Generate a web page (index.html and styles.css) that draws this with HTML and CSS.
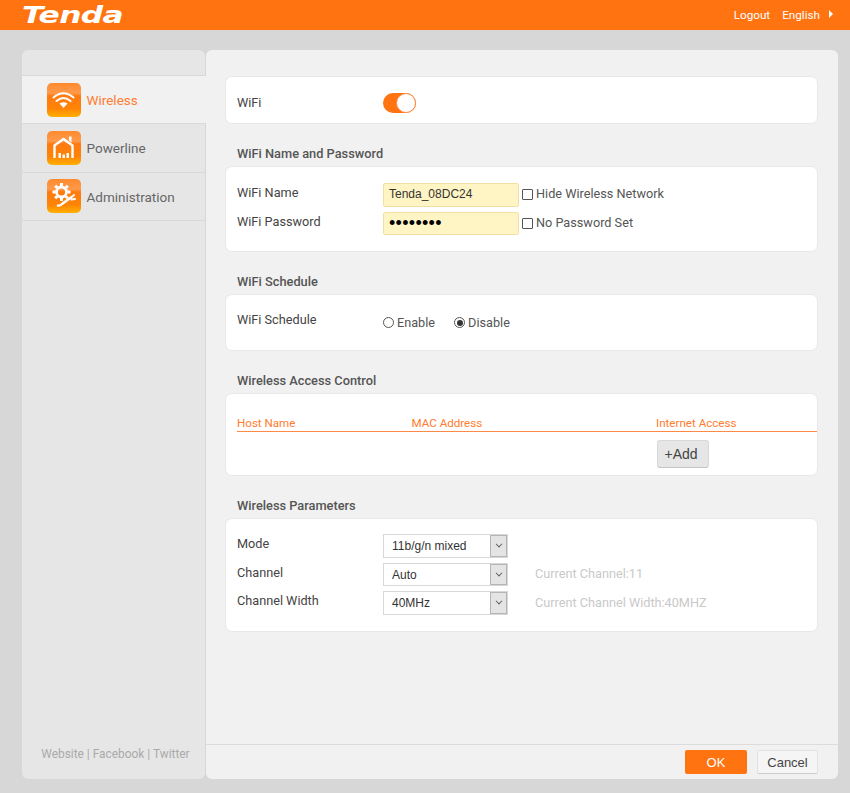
FILE: index.html
```html
<!DOCTYPE html>
<html lang="en">
<head>
  <meta charset="UTF-8" />
  <title>Tenda Web Master</title>
  <link rel="stylesheet" href="styles.css">
</head>
<body>
  <header class="topbar">
    <span class="logo">Tenda</span>
    <nav class="top-links">
      <a>Logout</a>
      <a class="lang">English</a>
    </nav>
  </header>

  <div class="shell">
    <aside class="sidebar">
      <ul class="menu">
        <li class="active">
          <span class="menu-icon">
            <svg viewBox="0 0 34 34" width="34" height="34"><g fill="none" stroke="#fff" stroke-linecap="round" stroke-width="2"><path d="M6.500 14.500Q16.500 6 26.500 14.500"/><path d="M9.500 18Q16.500 12 23.500 18"/></g><path fill="#fff" d="M12.500 20.500Q16.500 18 20.500 20.500L16.500 25z"/></svg>
          </span>
          <span class="menu-text">Wireless</span>
        </li>
        <li>
          <span class="menu-icon">
            <svg viewBox="0 0 34 34" width="34" height="34"><path fill="none" stroke="#fff" stroke-width="2.400" stroke-linejoin="round" d="M7.500 27V14.500L16.500 8l9 6.500V27"/><path fill="#fff" d="M22 5.500h2.500v6L22 9.500zM11.500 22h2.500v5h-2.500zM15.500 23.500H18V27h-2.500zM19.500 22H22v5h-2.500z"/></svg>
          </span>
          <span class="menu-text">Powerline</span>
        </li>
        <li>
          <span class="menu-icon">
            <svg viewBox="0 0 34 34" width="34" height="34"><circle cx="14.500" cy="13" r="5" fill="none" stroke="#fff" stroke-width="2.800"/><g stroke="#fff" stroke-width="3"><path d="M14.500 4v3M14.500 19v3M5.500 13h3M20.500 13h3M8.200 6.700l2 2M18.800 17.300l2 2M20.800 6.700l-2 2M8.200 19.300l2-2"/></g><path fill="none" stroke="#fff" stroke-width="2.400" stroke-linecap="round" d="M11 26.500c2 .5 3-.5 4-1.500l9-6.500"/><path fill="none" stroke="#fff" stroke-width="2" stroke-linecap="round" d="M24 18.500l3-2.500M24.500 20.500l3.500-.5"/></svg>
          </span>
          <span class="menu-text">Administration</span>
        </li>
      </ul>
      <div class="side-links">Website | Facebook | Twitter</div>
    </aside>

    <main class="content">
      <div class="sections">
        <section class="card card-wifi">
          <span class="label">WiFi</span>
          <span class="toggle"><i></i></span>
        </section>

        <h3>WiFi Name and Password</h3>
        <section class="card card-name">
          <div class="row">
            <span class="label">WiFi Name</span>
            <span class="field">Tenda_08DC24</span>
            <span class="check"><i></i>Hide Wireless Network</span>
          </div>
          <div class="row">
            <span class="label">WiFi Password</span>
            <span class="field dots">••••••••</span>
            <span class="check"><i></i>No Password Set</span>
          </div>
        </section>

        <h3>WiFi Schedule</h3>
        <section class="card card-schedule">
          <div class="row">
            <span class="label">WiFi Schedule</span>
            <span class="radio"><i></i>Enable</span>
            <span class="radio on"><i></i>Disable</span>
          </div>
        </section>

        <h3>Wireless Access Control</h3>
        <section class="card card-access">
          <div class="table-head">
            <span class="col-host">Host Name</span>
            <span class="col-mac">MAC Address</span>
            <span>Internet Access</span>
          </div>
          <button class="add">+Add</button>
        </section>

        <h3>Wireless Parameters</h3>
        <section class="card card-params">
          <div class="row">
            <span class="label">Mode</span>
            <span class="select">11b/g/n mixed</span>
          </div>
          <div class="row">
            <span class="label">Channel</span>
            <span class="select">Auto</span>
            <span class="hint">Current Channel:11</span>
          </div>
          <div class="row">
            <span class="label">Channel Width</span>
            <span class="select">40MHz</span>
            <span class="hint">Current Channel Width:40MHZ</span>
          </div>
        </section>
      </div>

      <footer class="actions">
        <button class="ok">OK</button>
        <button class="cancel">Cancel</button>
      </footer>
    </main>
  </div>
</body>
</html>
```

FILE: styles.css
```css
* {
  box-sizing: border-box;
}

html, body {
  margin: 0;
  height: 793px;
  overflow: hidden;
}

body {
  font-family: Roboto, "Open Sans", sans-serif;
  font-size: 12.700px;
  color: #555;
  background: #d7d7d7;
}

.topbar {
  height: 30px;
  background: #ff7310;
  display: flex;
  align-items: center;
  justify-content: space-between;
  padding: 0 17px 0 22px;
  color: #fff;
}

.logo {
  display: inline-block;
  font-family: "DejaVu Sans", sans-serif;
  font-weight: bold;
  font-style: italic;
  font-size: 23px;
  line-height: 30px;
  letter-spacing: -0.5px;
  color: #fff;
  transform: scaleX(1.36);
  transform-origin: left center;
}

.top-links {
  display: flex;
  gap: 12px;
  font-size: 11.700px;
  color: #fff;
}

.lang::after {
  content: "";
  display: inline-block;
  border-left: 4px solid #fff;
  border-top: 4px solid transparent;
  border-bottom: 4px solid transparent;
  margin-left: 9px;
  vertical-align: 1px;
}

.shell {
  display: flex;
  width: 816px;
  height: 729px;
  margin: 20px 0 0 22px;
  gap: 1px;
}

.sidebar {
  width: 183px;
  background: #e6e6e6;
  border-radius: 6px;
  padding-top: 25px;
  display: flex;
  flex-direction: column;
  justify-content: space-between;
}

.menu {
  list-style: none;
  margin: 0;
  padding: 0;
  border-top: 1px solid #d9d9d9;
}

.menu li {
  height: 48.330px;
  display: flex;
  align-items: center;
  gap: 5.500px;
  padding-left: 25px;
  border-bottom: 1px solid #d9d9d9;
  font-size: 13.500px;
  color: #666;
}

.menu li.active {
  background: #f1f1f1;
  color: #ff7c30;
  margin-right: -1px;
}

.menu-text {
  padding-top: 1px;
}

.menu-icon {
  width: 34px;
  height: 34px;
  border-radius: 5px;
  background: linear-gradient(#ff8a2e 0, #ff9a4a 30%, #ff7a10 38%, #ff8406 75%, #ffb000 100%);
  display: block;
}

.menu-icon svg {
  display: block;
}

.side-links {
  font-size: 11.900px;
  color: #aaa;
  text-align: center;
  padding: 0 0 17px 4px;
  line-height: 16px;
}

.content {
  flex: 1;
  background: #f1f1f1;
  border-radius: 6px;
  display: flex;
  flex-direction: column;
  justify-content: space-between;
}

.sections {
  padding: 26px 20px 0 19px;
}

.card {
  background: #fff;
  border: 1px solid #e8e8e8;
  border-radius: 7px;
}

.card-wifi {
  height: 48px;
  display: flex;
  align-items: center;
  padding: 5px 0 0 11px;
}

.card-wifi .label {
  width: 146px;
  padding-bottom: 0;
}

h3 {
  margin: 21px 0 4px 12px;
  font-size: 12.800px;
  line-height: 17px;
  font-weight: 500;
  color: #555;
}

.label {
  color: #444;
  width: 146px;
  flex: none;
  padding-bottom: 4px;
}

.row {
  display: flex;
  align-items: center;
  height: 23.500px;
  margin-bottom: 5px;
}

.card-name {
  height: 86px;
  padding: 16px 11px 0;
}

.field {
  width: 136px;
  height: 23.500px;
  background: #fff5c4;
  border: 1px solid #f2dfa6;
  border-radius: 2px;
  font-family: "Liberation Sans", sans-serif;
  font-size: 12px;
  line-height: 21px;
  color: #333;
  padding-left: 5px;
}

.field.dots {
  color: #000;
  font-size: 18px;
  letter-spacing: 0.300px;
}

.check {
  display: flex;
  align-items: center;
  margin-left: 3px;
  gap: 3px;
  color: #555;
  line-height: 15px;
  padding-bottom: 2px;
}

.check i {
  width: 11px;
  height: 11px;
  border: 1px solid #555;
  border-radius: 1px;
  display: block;
  margin-top: 2px;
}

.card-schedule {
  height: 57px;
  padding: 15px 11px 0;
}

.radio {
  display: flex;
  align-items: center;
  gap: 3px;
  margin-right: 19px;
  padding-top: 2px;
}

.radio i {
  width: 11px;
  height: 11px;
  border: 1px solid #555;
  border-radius: 50%;
  display: block;
  position: relative;
}

.radio.on i::after {
  content: "";
  position: absolute;
  left: 1.500px;
  top: 1.500px;
  width: 6px;
  height: 6px;
  border-radius: 50%;
  background: #333;
}

.card-access {
  height: 83px;
  padding: 21px 0 0 11px;
}

.table-head {
  display: flex;
  height: 17px;
  line-height: 17px;
  border-bottom: 1px solid #ff8a45;
  color: #ff7c30;
  font-size: 11.600px;
}

.col-host {
  width: 174.500px;
}

.col-mac {
  width: 244.500px;
}

.add {
  display: block;
  margin: 8px 0 0 420px;
  width: 52px;
  height: 27.500px;
  background: #e6e6e6;
  border: 1px solid #d8d8d8;
  border-bottom-color: #c4c4c4;
  border-radius: 3px;
  font-family: "Liberation Sans", sans-serif;
  font-size: 14px;
  color: #444;
  padding: 0 4px 0 0;
}

.card-params {
  height: 114px;
  padding: 15px 11px 0;
}

.select {
  width: 125px;
  height: 23.500px;
  border: 1px solid #d8d8d8;
  font-family: "Liberation Sans", sans-serif;
  font-size: 12px;
  line-height: 22px;
  color: #333;
  padding-left: 8px;
  position: relative;
  flex: none;
}

.select::after {
  content: "";
  position: absolute;
  right: 0;
  top: 0;
  bottom: 0;
  width: 15px;
  background: #e4e4e4;
  border: 1px solid #b5b5b5;
}

.select::before {
  content: "";
  position: absolute;
  right: 5px;
  top: 6px;
  width: 5px;
  height: 5px;
  border-right: 1px solid #555;
  border-bottom: 1px solid #555;
  transform: rotate(45deg) scale(0.8);
  z-index: 1;
}

.hint {
  margin-left: 27px;
  color: #c9c9c9;
  padding-bottom: 1px;
}

.toggle {
  width: 33px;
  height: 20px;
  border-radius: 10px;
  background: #ff7310;
  display: block;
  position: relative;
}

.toggle i {
  position: absolute;
  right: 0;
  top: 0;
  width: 20px;
  height: 20px;
  border-radius: 50%;
  background: #fff;
  border: 1px solid #ff8a45;
}

.actions {
  height: 35px;
  margin-bottom: 0;
  border-top: 1px solid #dcdcdc;
  display: flex;
  justify-content: flex-end;
  align-items: flex-start;
  gap: 10px;
  padding: 5px 20px 0 0;
}

.actions button {
  height: 24px;
  font-family: "Liberation Sans", sans-serif;
  font-size: 13px;
  border-radius: 2px;
  padding: 0;
}

.ok {
  width: 62px;
  background: #ff7310;
  border: none;
  color: #fff;
}

.cancel {
  width: 61px;
  background: #f5f5f5;
  border: 1px solid #e2e2e2;
  border-bottom-color: #ccc;
  color: #444;
}
```
